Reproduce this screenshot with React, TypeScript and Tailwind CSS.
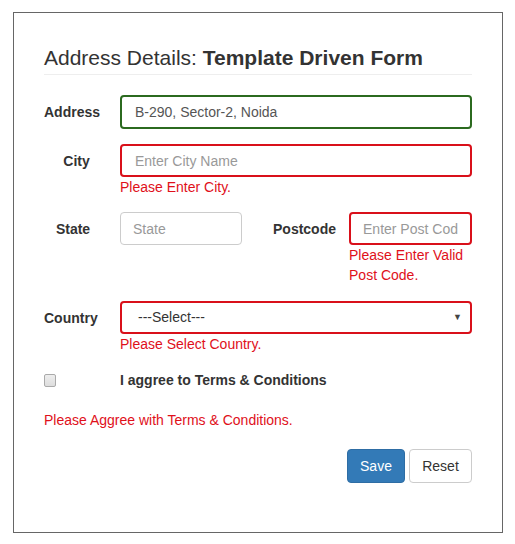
import React from "react"

const font = { fontFamily: '"Liberation Sans", Arial, sans-serif' }

function Label({ children, className = "" }: { children: React.ReactNode; className?: string }) {
  return (
    <div className={`w-[56px] shrink-0 text-center text-[14px] font-bold text-[#333] ${className}`}>{children}</div>
  )
}

export default function App() {
  return (
    <div className="h-[544px] w-[515px] bg-white pl-[13px] pt-[12px]" style={font}>
      <div className="h-[521px] w-[490px] border border-[#666] px-[30px] pt-[33px]">
        {/* Heading */}
        <h3 className="border-b border-[#eee] pb-[5px] text-[21px] leading-[23px] text-[#333]">
          Address Details: <b>Template Driven Form</b>
        </h3>

        {/* Address */}
        <div className="mt-[20px] flex items-center gap-[20px]">
          <Label>Address</Label>
          <input
            defaultValue="B-290, Sector-2, Noida"
            className="h-[34px] w-[352px] rounded-[4px] border-2 border-[#2b6a1f] px-[13px] text-[14px] text-[#555] outline-none"
            style={font}
          />
        </div>

        {/* City */}
        <div className="mt-[15px] flex gap-[20px]">
          <Label className="pt-[7px] pl-[9px]">City</Label>
          <div>
            <input
              placeholder="Enter City Name"
              className="h-[33px] w-[352px] rounded-[4px] border-2 border-[#d9101a] px-[13px] text-[14px] text-[#555] outline-none placeholder:text-[#999]"
              style={font}
            />
            <div className="text-[14px] leading-[20px] text-[#e0101a]">Please Enter City.</div>
          </div>
        </div>

        {/* State / Postcode */}
        <div className="mt-[15px] flex gap-[20px]">
          <Label className="pt-[7px] pl-[2px]">State</Label>
          <input
            placeholder="State"
            className="h-[33px] w-[122px] rounded-[4px] border border-[#ccc] px-[12px] text-[14px] text-[#555] outline-none placeholder:text-[#999]"
            style={font}
          />
          <div className="ml-[11px] pt-[7px] text-[14px] font-bold text-[#333]">Postcode</div>
          <div className="ml-[-7px]">
            <input
              placeholder="Enter Post Code"
              className="h-[33px] w-[123px] rounded-[4px] border-2 border-[#d9101a] px-[12px] text-[14px] text-[#555] outline-none placeholder:text-[#999]"
              style={font}
            />
            <div className="w-[123px] text-[14px] leading-[20px] text-[#e0101a]">Please Enter Valid Post Code.</div>
          </div>
        </div>

        {/* Country */}
        <div className="mt-[16px] flex gap-[20px]">
          <Label className="pt-[7px] pr-[3px]">Country</Label>
          <div>
            <div className="flex h-[33px] w-[352px] items-center justify-between rounded-[4px] border-2 border-[#d9101a] pl-[16px] pr-[8px] text-[14px] text-[#333]">
              <span>---Select---</span>
              <span className="text-[9px] text-[#444]">▼</span>
            </div>
            <div className="text-[14px] leading-[20px] text-[#e0101a]">Please Select Country.</div>
          </div>
        </div>

        {/* Terms */}
        <div className="mt-[16px] flex items-center">
          <span className="h-[13px] w-[12px] rounded-[2px] border border-[#aaa] bg-gradient-to-b from-[#eee] to-[#ddd]" />
          <span className="ml-[64px] text-[14px] font-bold text-[#333]">I aggree to Terms &amp; Conditions</span>
        </div>

        <div className="mt-[19px] text-[14px] leading-[20px] text-[#e0101a]">
          Please Aggree with Terms &amp; Conditions.
        </div>

        {/* Buttons */}
        <div className="mt-[19px] flex justify-end gap-[4px]">
          <button className="h-[34px] w-[58px] rounded-[4px] border border-[#2e6da4] bg-[#337ab7] text-[14px] text-white">
            Save
          </button>
          <button className="h-[34px] w-[63px] rounded-[4px] border border-[#ccc] bg-white text-[14px] text-[#333]">
            Reset
          </button>
        </div>
      </div>
    </div>
  )
}
